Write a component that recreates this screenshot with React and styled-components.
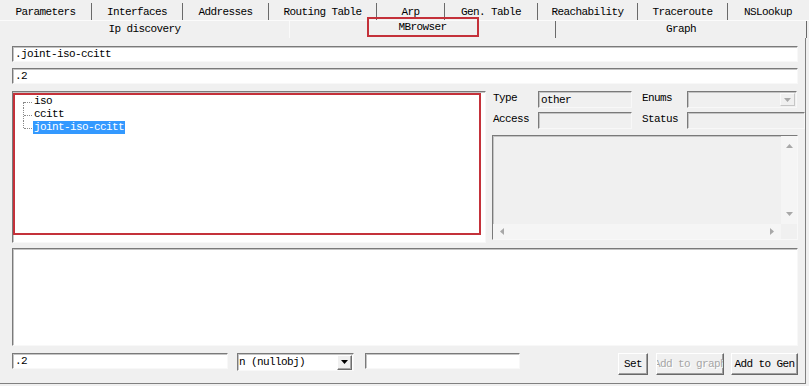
import React from 'react';
import styled, { createGlobalStyle, css } from 'styled-components';

const mono = css`
  font-family: "Liberation Mono", "DejaVu Sans Mono", monospace;
  font-size: 11px;
  letter-spacing: -0.6px;
`;

const Global = createGlobalStyle`
  html, body { margin: 0; padding: 0; background: #f0f0f0; }
`;

const Page = styled.div`
  width: 809px;
  height: 386px;
  overflow: hidden;
  background: #f0f0f0;
  color: #000;
  ${mono}
`;

const TabRow = styled.div`
  display: flex;
  box-sizing: border-box;
  height: ${(p) => p.$h}px;
  border-top: ${(p) => (p.$top ? '1px solid #fbfbfb' : 'none')};
`;

const Tab = styled.div`
  flex: 0 0 ${(p) => p.$w}px;
  box-sizing: border-box;
  display: flex;
  align-items: center;
  justify-content: center;
  white-space: nowrap;
  margin-top: ${(p) => p.$mt || 0}px;
  padding-bottom: ${(p) => p.$pb || 0}px;
  border-right: 1px solid ${(p) => p.$sep || 'transparent'};
`;

const MarkedLabel = styled.div`
  align-self: flex-start;
  margin-top: -4px;
  width: 112px;
  height: 20px;
  box-sizing: border-box;
  border: 2px solid #c4313a;
  display: flex;
  align-items: center;
  justify-content: center;
`;

const Panel = styled.div`
  box-sizing: border-box;
  width: 806px;
  height: 346px;
  border-right: 1px solid #808080;
  border-bottom: 1px solid #808080;
  padding: 8px 7px 0 12px;
  display: flex;
  flex-direction: column;
`;

const sunken = css`
  border: 1px solid;
  border-color: #7a7a7a #f8f8f8 #f8f8f8 #7a7a7a;
  box-shadow: inset 1px 1px 0 #c4c4c4;
`;

const Field = styled.div`
  box-sizing: border-box;
  flex-shrink: 0;
  height: ${(p) => p.$h || 16}px;
  width: ${(p) => (p.$w ? `${p.$w}px` : 'auto')};
  margin-top: ${(p) => p.$mt || 0}px;
  margin-left: ${(p) => p.$ml || 0}px;
  background: ${(p) => (p.$disabled ? '#f0f0f0' : '#fff')};
  ${sunken}
  padding-left: 2px;
  display: flex;
  align-items: center;
  white-space: nowrap;
  overflow: hidden;
`;

const Middle = styled.div`
  display: flex;
  margin-top: 7px;
  height: 152px;
`;

const TreeView = styled.div`
  box-sizing: border-box;
  width: 474px;
  height: 152px;
  background: #fff;
  ${sunken}
`;

const RedFrame = styled.div`
  box-sizing: border-box;
  width: 468px;
  height: 142px;
  margin-top: 1px;
  border: 2px solid #c4313a;
  background: #fff;
`;

const TreeList = styled.ul`
  list-style: none;
  margin: 0 0 0 8px;
  padding: 0;
`;

const TreeItem = styled.li`
  position: relative;
  height: 13px;
  padding-left: 10px;
  display: flex;
  align-items: center;
  &::before {
    content: '';
    position: absolute;
    left: 0;
    top: ${(p) => (p.$first ? '50%' : '0')};
    height: ${(p) => (p.$first || p.$last ? '50%' : '100%')};
    border-left: 1px dotted #8a8a8a;
  }
  &::after {
    content: '';
    position: absolute;
    left: 1px;
    top: 50%;
    width: 8px;
    border-top: 1px dotted #8a8a8a;
  }
`;

const ItemText = styled.span`
  padding: 0 1px;
  height: 13px;
  line-height: 13px;
  white-space: nowrap;
  background: ${(p) => (p.$sel ? '#3399ff' : 'transparent')};
  color: ${(p) => (p.$sel ? '#fff' : '#000')};
`;

const RightCol = styled.div`
  margin-left: 6px;
  width: 306px;
  display: flex;
  flex-direction: column;
`;

const FormRow = styled.div`
  display: flex;
  align-items: flex-start;
  height: 17px;
  margin-top: ${(p) => p.$mt || 0}px;
`;

const Label = styled.span`
  box-sizing: border-box;
  flex-shrink: 0;
  width: ${(p) => p.$w}px;
  margin-left: ${(p) => p.$ml || 0}px;
  padding-left: 1px;
  line-height: 14px;
  white-space: nowrap;
`;

const Combo = styled.div`
  box-sizing: border-box;
  flex-shrink: 0;
  width: ${(p) => p.$w}px;
  height: ${(p) => p.$h}px;
  margin-left: ${(p) => p.$ml || 0}px;
  background: ${(p) => (p.$disabled ? '#f0f0f0' : '#fff')};
  ${sunken}
  display: flex;
  align-items: center;
  padding: 0 1px 0 1px;
`;

const ComboText = styled.span`
  flex: 1;
  white-space: nowrap;
  overflow: hidden;
`;

const DropButton = styled.div`
  box-sizing: border-box;
  width: 15px;
  height: ${(p) => p.$h}px;
  background: #f0f0f0;
  border: 1px solid;
  border-color: ${(p) =>
    p.$disabled ? '#fafafa #c6c6c6 #c6c6c6 #fafafa' : '#fff #6e6e6e #6e6e6e #fff'};
  box-shadow: ${(p) => (p.$disabled ? 'none' : 'inset -1px -1px 0 #a8a8a8')};
  display: flex;
  align-items: center;
  justify-content: center;
`;

const ValueBox = styled.div`
  margin-top: 6px;
  height: 105px;
  box-sizing: border-box;
  background: #f0f0f0;
  ${sunken}
  display: grid;
  grid-template-columns: 1fr 16px;
  grid-template-rows: 1fr 15px;
`;

const VScroll = styled.div`
  grid-column: 2;
  grid-row: 1;
  background: #f5f5f5;
  display: flex;
  flex-direction: column;
  justify-content: space-between;
  align-items: center;
  padding: 8px 0;
`;

const HScroll = styled.div`
  grid-column: 1;
  grid-row: 2;
  background: #f5f5f5;
  display: flex;
  justify-content: space-between;
  align-items: center;
  padding: 0 7px;
`;

const Corner = styled.div`
  grid-column: 2;
  grid-row: 2;
  background: #f0f0f0;
`;

const Output = styled.div`
  margin-top: 5px;
  height: 98px;
  box-sizing: border-box;
  flex-shrink: 0;
  background: #fff;
  ${sunken}
`;

const BottomRow = styled.div`
  display: flex;
  align-items: flex-start;
  margin-top: 7px;
  height: 22px;
`;

const Spacer = styled.div`
  flex: 1;
`;

const Button = styled.div`
  box-sizing: border-box;
  flex-shrink: 0;
  width: ${(p) => p.$w}px;
  height: 22px;
  margin-left: ${(p) => p.$ml || 0}px;
  background: #f0f0f0;
  color: ${(p) => (p.$disabled ? '#a6a6a6' : '#000')};
  text-shadow: ${(p) => (p.$disabled ? '1px 1px 0 #fff' : 'none')};
  border: 1px solid;
  border-color: #fff #696969 #696969 #fff;
  box-shadow: inset -1px -1px 0 #a0a0a0;
  display: flex;
  align-items: center;
  justify-content: center;
  overflow: hidden;
  white-space: nowrap;
`;

const Arrow = ({ dir = 'down', color = '#000' }) => {
  const vertical = dir === 'up' || dir === 'down';
  const w = vertical ? 7 : 4;
  const h = vertical ? 4 : 7;
  const pts = {
    down: '0,0 7,0 3.5,4',
    up: '0,4 7,4 3.5,0',
    left: '4,0 4,7 0,3.5',
    right: '0,0 0,7 4,3.5',
  }[dir];
  return (
    <svg width={w} height={h} viewBox={`0 0 ${w} ${h}`}>
      <polygon points={pts} fill={color} />
    </svg>
  );
};

const row1 = [
  ['Parameters', 92],
  ['Interfaces', 91],
  ['Addresses', 86],
  ['Routing Table', 108],
  ['Arp', 68],
  ['Gen. Table', 93],
  ['Reachability', 100],
  ['Traceroute', 90],
  ['NSLookup', 81],
];

const treeItems = ['iso', 'ccitt', 'joint-iso-ccitt'];

export default function App() {
  return (
    <Page>
      <Global />
      <TabRow $h={20}>
        {row1.map(([t, w], i) => (
          <Tab key={t} $w={w} $mt={3} $sep={i < row1.length - 1 ? '#6a6a6a' : undefined}>
            {t}
          </Tab>
        ))}
      </TabRow>
      <TabRow $h={18} $top>
        <Tab $w={290} $pb={2} $sep="#fafafa">Ip discovery</Tab>
        <Tab $w={266} $sep="#6a6a6a">
          <MarkedLabel>MBrowser</MarkedLabel>
        </Tab>
        <Tab $w={251} $pb={2} $sep="#6a6a6a">Graph</Tab>
      </TabRow>
      <Panel>
        <Field>.joint-iso-ccitt</Field>
        <Field $mt={6}>.2</Field>
        <Middle>
          <TreeView>
            <RedFrame>
              <TreeList>
                {treeItems.map((t, i) => (
                  <TreeItem key={t} $first={i === 0} $last={i === treeItems.length - 1}>
                    <ItemText $sel={i === treeItems.length - 1}>{t}</ItemText>
                  </TreeItem>
                ))}
              </TreeList>
            </RedFrame>
          </TreeView>
          <RightCol>
            <FormRow>
              <Label $w={46}>Type</Label>
              <Field $w={94} $h={17} $disabled>other</Field>
              <Label $w={46} $ml={9}>Enums</Label>
              <Combo $w={110} $h={17} $disabled>
                <ComboText />
                <DropButton $h={13} $disabled>
                  <Arrow dir="down" color="#a8a8a8" />
                </DropButton>
              </Combo>
            </FormRow>
            <FormRow $mt={4}>
              <Label $w={46}>Access</Label>
              <Field $w={94} $h={17} $disabled />
              <Label $w={46} $ml={9}>Status</Label>
              <Field $w={118} $h={17} $disabled />
            </FormRow>
            <ValueBox>
              <VScroll>
                <Arrow dir="up" color="#a8a8a8" />
                <Arrow dir="down" color="#a8a8a8" />
              </VScroll>
              <HScroll>
                <Arrow dir="left" color="#a8a8a8" />
                <Arrow dir="right" color="#a8a8a8" />
              </HScroll>
              <Corner />
            </ValueBox>
          </RightCol>
        </Middle>
        <Output />
        <BottomRow>
          <Field $w={216}>.2</Field>
          <Combo $w={117} $h={18} $ml={9}>
            <ComboText>n (nullobj)</ComboText>
            <DropButton $h={15}>
              <Arrow dir="down" />
            </DropButton>
          </Combo>
          <Field $w={155} $ml={11} />
          <Spacer />
          <Button $w={30}>Set</Button>
          <Button $w={68} $ml={8} $disabled>Add to graph</Button>
          <Button $w={67} $ml={7}>Add to Gen</Button>
        </BottomRow>
      </Panel>
    </Page>
  );
}
